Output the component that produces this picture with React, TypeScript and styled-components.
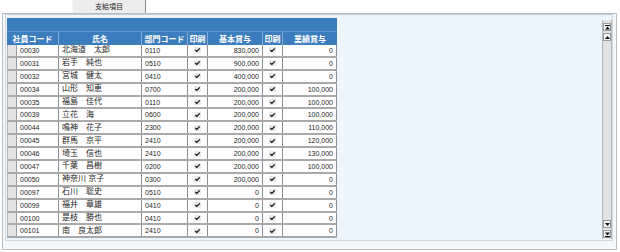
import React from "react";
import styled, { createGlobalStyle } from "styled-components";

const GlobalStyle = createGlobalStyle`
  html, body { margin: 0; padding: 0; background: #ffffff; }
  body { font-family: "Liberation Sans", "Noto Sans CJK JP", sans-serif; }
  * { box-sizing: border-box; }
`;

const Page = styled.div`
  width: 620px;
  height: 252px;
  overflow: hidden;
  background: #ffffff;
`;

const TabBar = styled.div`
  height: 13px;
  padding-left: 72px;
  display: flex;
`;

const Tab = styled.div`
  width: 74px;
  height: 13px;
  background: #ededed;
  border-left: 1px solid #f8f8f8;
  border-right: 1px solid #8a8a8a;
  font-family: "Noto Sans CJK JP", sans-serif;
  font-size: 7px;
  color: #222;
  display: flex;
  align-items: center;
  justify-content: center;
  line-height: 1;
`;

const Panel = styled.div`
  margin-left: 2px;
  width: 615px;
  height: 237px;
  border: 1px solid #b9bec4;
  background: #f5f8fb;
  padding: 0 3px 0 2px;
`;

const Grid = styled.div`
  height: 227px;
  display: flex;
  background: #eef6fd;
  border: 1px solid #cfd8e0;
  border-top-color: #c4ccd4;
  padding: 3px 0 0 1px;
`;

const TableArea = styled.div`
  flex: 1;
  display: flex;
  flex-direction: column;
`;

const Table = styled.div`
  width: 330px;
  display: flex;
  flex-direction: column;
`;

const Caption = styled.div`
  height: 14px;
  background: #3c7dbd;
  border-bottom: 1px solid #5f95cc;
`;

const cols = "10px 42px 83px 46px 20px 55px 20px 54px";

const HeaderRow = styled.div`
  height: 13px;
  display: grid;
  grid-template-columns: ${cols};
  background: #3c7dbd;
`;

const HeadCell = styled.div<{ $span?: number }>`
  grid-column: span ${(p) => p.$span ?? 1};
  border-right: 1px solid #86abd6;
  color: #ffffff;
  font-family: "Noto Sans CJK JP", sans-serif;
  font-weight: 700;
  font-size: 8px;
  line-height: 1;
  display: flex;
  align-items: center;
  justify-content: center;
  white-space: nowrap;
  &:last-child { border-right: none; }
`;

const Row = styled.div`
  height: 12.9px;
  display: grid;
  grid-template-columns: ${cols};
  border-bottom: 2px solid #a9a9a9;
`;

const Selector = styled.div`
  background: #e3e3e3;
  border-right: 1px solid #9c9c9c;
  border-left: 1px solid #b9b9b9;
`;

const Cell = styled.div<{ $align?: "left" | "right" | "center"; $cjk?: boolean }>`
  background: #ffffff;
  border-right: 1px solid #8f8f8f;
  color: #1e1e1e;
  font-size: ${(p) => (p.$cjk ? "8px" : "7px")};
  font-family: "Liberation Sans", "Noto Sans CJK JP", sans-serif;
  line-height: 1;
  display: flex;
  align-items: center;
  justify-content: ${(p) =>
    p.$align === "right" ? "flex-end" : p.$align === "center" ? "center" : "flex-start"};
  padding: ${(p) => (p.$align === "right" ? "0 3px 0 0" : p.$align === "center" ? "0" : "0 0 0 3px")};
  white-space: pre;
  overflow: hidden;
`;

const ScrollBar = styled.div`
  width: 10px;
  margin-top: 2px;
  margin-bottom: 1px;
  margin-right: 0;
  background: #e3e3e3;
  border-left: 1px solid #b5b5b5;
  border-right: 1px solid #b5b5b5;
  display: flex;
  flex-direction: column;
  align-items: center;
  padding: 3px 0 1px;
  gap: 2px;
`;

const ScrollButton = styled.div`
  width: 8px;
  height: 8px;
  background: #f3f3f3;
  border: 1px solid #9a9a9a;
  display: flex;
  align-items: center;
  justify-content: center;
`;

const Track = styled.div`
  flex: 1;
`;

const Check = () => (
  <svg width="7" height="6" viewBox="0 0 7 6">
    <rect x="0" y="0" width="7" height="6" fill="#e9e9e9" />
    <path d="M1.3 3 L2.8 4.5 L5.8 1.3" stroke="#111" strokeWidth="1.2" fill="none" />
  </svg>
);

const Arrow = ({ dir, bar }: { dir: "up" | "down"; bar?: boolean }) => (
  <svg width="5" height="5" viewBox="0 0 5 5">
    {dir === "up" ? (
      <>
        {bar && <rect x="0" y="0" width="5" height="1" fill="#111" />}
        <path d={bar ? "M2.5 1.6 L5 4.4 L0 4.4 Z" : "M2.5 1 L5 4 L0 4 Z"} fill="#111" />
      </>
    ) : (
      <>
        <path d={bar ? "M0 0.6 L5 0.6 L2.5 3.4 Z" : "M0 1 L5 1 L2.5 4 Z"} fill="#111" />
        {bar && <rect x="0" y="4" width="5" height="1" fill="#111" />}
      </>
    )}
  </svg>
);

type Rec = { code: string; name: string; dept: string; basic: string; perf: string };

const rows: Rec[] = [
  { code: "00030", name: "北海道　太郎", dept: "0110", basic: "830,000", perf: "0" },
  { code: "00031", name: "岩手　純也", dept: "0510", basic: "900,000", perf: "0" },
  { code: "00032", name: "宮城　健太", dept: "0410", basic: "400,000", perf: "0" },
  { code: "00034", name: "山形　知恵", dept: "0700", basic: "200,000", perf: "100,000" },
  { code: "00035", name: "福島　佳代", dept: "0110", basic: "200,000", perf: "100,000" },
  { code: "00039", name: "立花　海", dept: "0600", basic: "200,000", perf: "100,000" },
  { code: "00044", name: "鳴神　花子", dept: "2300", basic: "200,000", perf: "110,000" },
  { code: "00045", name: "群馬　京平", dept: "2410", basic: "200,000", perf: "120,000" },
  { code: "00046", name: "埼玉　信也", dept: "2410", basic: "200,000", perf: "130,000" },
  { code: "00047", name: "千葉　昌樹", dept: "0200", basic: "200,000", perf: "100,000" },
  { code: "00050", name: "神奈川 京子", dept: "0300", basic: "200,000", perf: "0" },
  { code: "00097", name: "石川　聡史", dept: "0510", basic: "0", perf: "0" },
  { code: "00099", name: "福井　章雄", dept: "0410", basic: "0", perf: "0" },
  { code: "00100", name: "是枝　勝也", dept: "0410", basic: "0", perf: "0" },
  { code: "00101", name: "南　良太郎", dept: "2410", basic: "0", perf: "0" },
];

export default function App() {
  return (
    <Page>
      <GlobalStyle />
      <TabBar>
        <Tab>支給項目</Tab>
      </TabBar>
      <Panel>
        <Grid>
          <TableArea>
            <Table>
              <Caption />
              <HeaderRow>
                <HeadCell $span={2}>社員コード</HeadCell>
                <HeadCell>氏名</HeadCell>
                <HeadCell>部門コード</HeadCell>
                <HeadCell>印刷</HeadCell>
                <HeadCell>基本賞与</HeadCell>
                <HeadCell>印刷</HeadCell>
                <HeadCell>業績賞与</HeadCell>
              </HeaderRow>
              {rows.map((r) => (
                <Row key={r.code}>
                  <Selector />
                  <Cell>{r.code}</Cell>
                  <Cell $cjk>{r.name}</Cell>
                  <Cell>{r.dept}</Cell>
                  <Cell $align="center"><Check /></Cell>
                  <Cell $align="right">{r.basic}</Cell>
                  <Cell $align="center"><Check /></Cell>
                  <Cell $align="right">{r.perf}</Cell>
                </Row>
              ))}
            </Table>
          </TableArea>
          <ScrollBar>
            <ScrollButton><Arrow dir="up" bar /></ScrollButton>
            <ScrollButton><Arrow dir="up" /></ScrollButton>
            <Track />
            <ScrollButton><Arrow dir="down" /></ScrollButton>
            <ScrollButton><Arrow dir="down" bar /></ScrollButton>
          </ScrollBar>
        </Grid>
      </Panel>
    </Page>
  );
}
